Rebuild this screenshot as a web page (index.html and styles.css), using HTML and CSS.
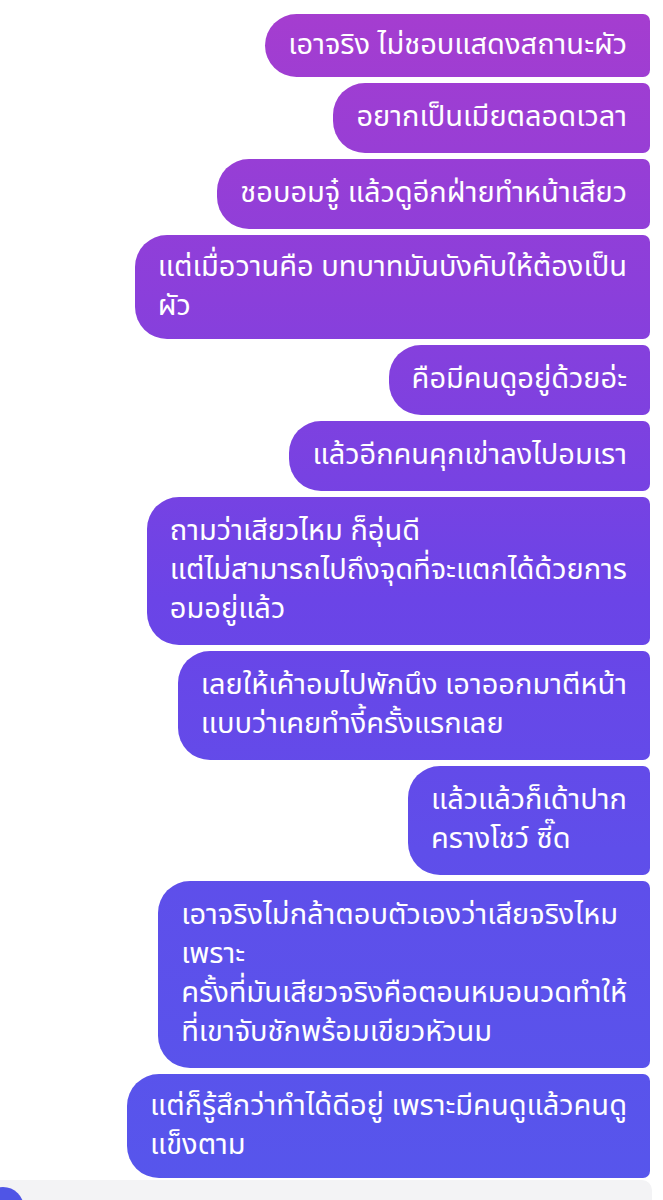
FILE: index.html
```html
<!DOCTYPE html>
<html lang="th">
<head>
    <meta charset="UTF-8">
    <meta name="viewport" content="width=device-width, initial-scale=1.0">
    <title>แชท</title>
    <link rel="stylesheet" href="styles.css">
</head>
<body>
    <div class="chat">
        <div class="bubble first">เอาจริง ไม่ชอบแสดงสถานะผัว</div>
        <div class="bubble">อยากเป็นเมียตลอดเวลา</div>
        <div class="bubble">ชอบอมจู๋ แล้วดูอีกฝ่ายทำหน้าเสียว</div>
        <div class="bubble tight">แต่เมื่อวานคือ บทบาทมันบังคับให้ต้องเป็น<br>ผัว</div>
        <div class="bubble">คือมีคนดูอยู่ด้วยอ่ะ</div>
        <div class="bubble">แล้วอีกคนคุกเข่าลงไปอมเรา</div>
        <div class="bubble">ถามว่าเสียวไหม ก็อุ่นดี<br>แต่ไม่สามารถไปถึงจุดที่จะแตกได้ด้วยการ<br>อมอยู่แล้ว</div>
        <div class="bubble">เลยให้เค้าอมไปพักนึง เอาออกมาตีหน้า<br>แบบว่าเคยทำงี้ครั้งแรกเลย</div>
        <div class="bubble">แล้วแล้วก็เด้าปาก<br>ครางโชว์ ซี๊ด</div>
        <div class="bubble">เอาจริงไม่กล้าตอบตัวเองว่าเสียจริงไหม<br>เพราะ<br>ครั้งที่มันเสียวจริงคือตอนหมอนวดทำให้<br>ที่เขาจับชักพร้อมเขียวหัวนม</div>
        <div class="bubble tight">แต่ก็รู้สึกว่าทำได้ดีอยู่ เพราะมีคนดูแล้วคนดู<br>แข็งตาม</div>
    </div>
    <div class="composer">
        <span class="dot"></span>
    </div>
</body>
</html>
```

FILE: styles.css
```css
body{
    margin: 0;
    background: #ffffff;
    font-family: "Noto Sans Thai", "Noto Sans", "DejaVu Sans", sans-serif;
    height: 1200px;
    overflow: hidden;
}

.chat{
    display: flex;
    flex-direction: column;
    align-items: flex-end;
    gap: 6px;
    padding: 14px 13px 0 0;
}

.bubble{
    max-width: 580px;
    padding: 15px 23px 16px 23px;
    border-radius: 32px 7px 7px 32px;
    color: #ffffff;
    font-size: 29px;
    line-height: 39px;
    white-space: nowrap;
    /* 메신저처럼 화면 기준 그라데이션 */
    background: linear-gradient(to bottom, #a63dcf 0px, #8a3fdb 300px, #6b44e7 600px, #5f4eea 850px, #5656ec 1200px);
    background-attachment: fixed;
}

.bubble.first{
    padding-top: 12px;
    padding-bottom: 12px;
}

.bubble.tight{
    padding-top: 13px;
    padding-bottom: 13px;
}

.composer{
    position: relative;
    margin-top: 2px;
    width: 652px;
    height: 30px;
    background: #f3f3f5;
    border-radius: 0 10px 0 0;
    overflow: hidden;
}

.composer .dot{
    position: absolute;
    left: -18px;
    top: 7px;
    width: 42px;
    height: 42px;
    border-radius: 50%;
    background: #4f55e6;
}
```
